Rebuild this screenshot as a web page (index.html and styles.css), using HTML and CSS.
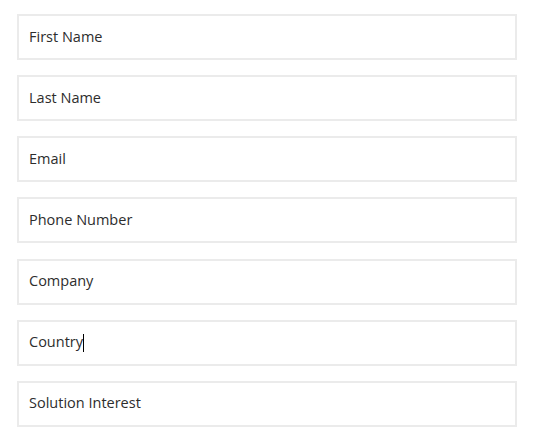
FILE: index.html
```html
<!DOCTYPE html>
<html>
<head>
<meta charset="utf-8">
<link rel="stylesheet" href="styles.css">
</head>
<body>
<form class="form">
  <div class="field"><span class="value">First Name</span></div>
  <div class="field"><span class="value">Last Name</span></div>
  <div class="field"><span class="value">Email</span></div>
  <div class="field"><span class="value">Phone Number</span></div>
  <div class="field"><span class="value">Company</span></div>
  <div class="field"><span class="value">Country</span><span class="caret"></span></div>
  <div class="field"><span class="value">Solution Interest</span></div>
</form>
</body>
</html>
```
FILE: styles.css
```css
html, body {
  margin: 0;
  padding: 0;
  background: #ffffff;
}
.form {
  display: flex;
  flex-direction: column;
  gap: 15.17px;
  padding: 14px 0 0 17px;
  width: 500px;
  font-family: "Open Sans", "Noto Sans", sans-serif;
  font-size: 14.5px;
  color: #2d2d2d;
}
.field {
  box-sizing: border-box;
  height: 46px;
  border: 2px solid #ebebeb;
  display: flex;
  align-items: center;
  padding: 0 10px 2px 10px;
}
.caret {
  display: inline-block;
  width: 1px;
  height: 18px;
  background: #000;
  margin-top: 3px;
}
```
